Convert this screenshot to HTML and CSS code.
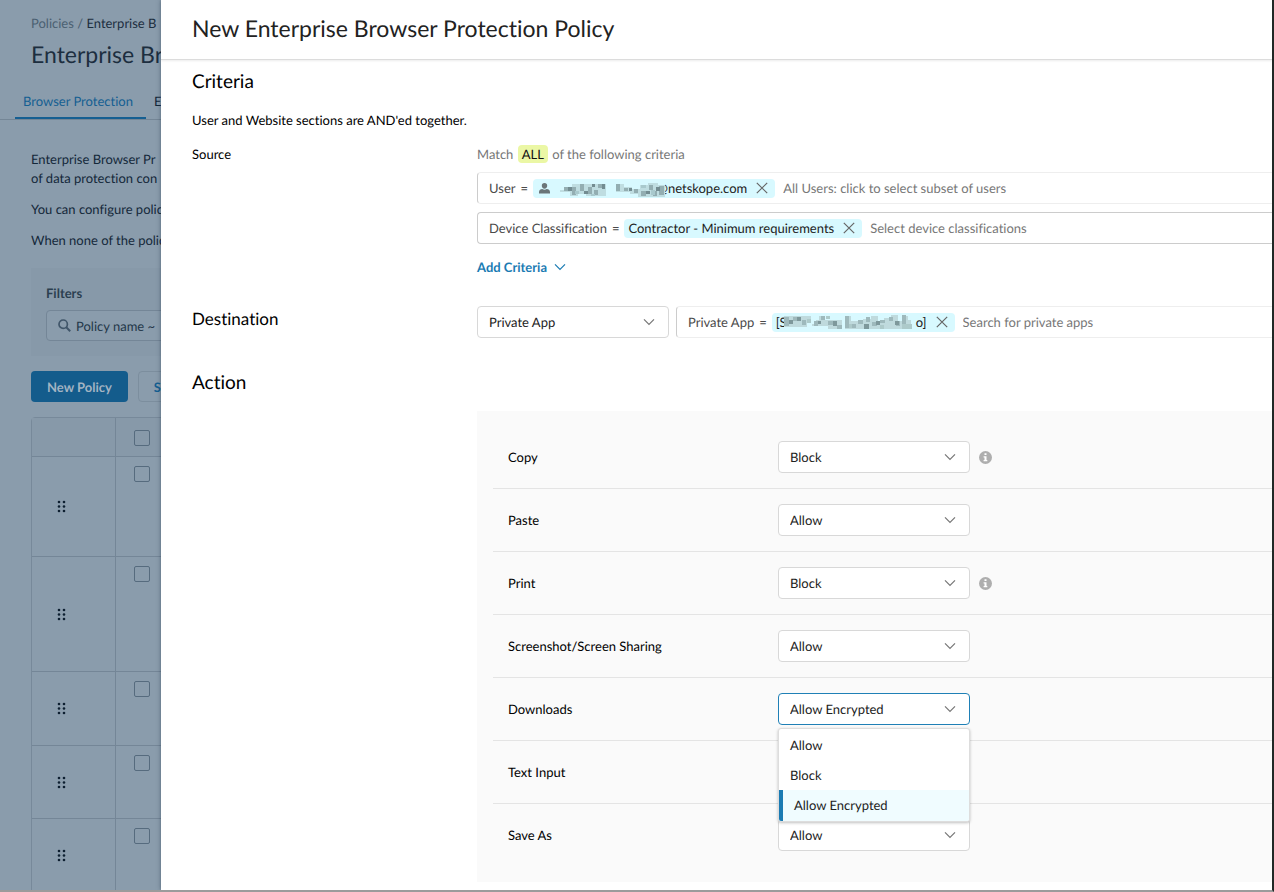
FILE: index.html
```html
<!DOCTYPE html>
<html lang="en">
<head>
<meta charset="utf-8">
<title>New Enterprise Browser Protection Policy</title>
<link rel="stylesheet" href="styles.css">
</head>
<body>
<svg class="sprite" aria-hidden="true">
  <symbol id="chevron" viewBox="0 0 12 8"><path d="M1 1.3 6 6.5 11 1.3" fill="none" stroke="currentColor" stroke-width="1.2"/></symbol>
  <symbol id="close" viewBox="0 0 12 12"><path d="M.8.8 11.2 11.2M11.2.8.8 11.2" fill="none" stroke="currentColor" stroke-width="1.2"/></symbol>
  <symbol id="grip" viewBox="0 0 9 13"><g fill="currentColor"><circle cx="2" cy="2" r="1.3"/><circle cx="7" cy="2" r="1.3"/><circle cx="2" cy="6.5" r="1.3"/><circle cx="7" cy="6.5" r="1.3"/><circle cx="2" cy="11" r="1.3"/><circle cx="7" cy="11" r="1.3"/></g></symbol>
  <symbol id="info" viewBox="0 0 13 13"><circle cx="6.500" cy="6.500" r="6.500" fill="#aeaeae"/><path d="M5.500 2.300h2v1.800h-2zM4.600 5.200h2.900v3.800h.8v1.300H4.600V9h.9V6.500h-.9z" fill="#fff"/></symbol>
</svg>
<div class="app">
  <main class="page">
    <nav class="crumbs"><a href="#">Policies</a> <span>/</span> <b>Enterprise B</b></nav>
    <h1 class="page-title">Enterprise Br</h1>
    <nav class="tabs"><a class="tab tab-active" href="#">Browser Protection</a><a class="tab" href="#">E</a></nav>
    <div class="content">
      <p>Enterprise Browser Pr<br>of data protection con</p>
      <p>You can configure polic</p>
      <p>When none of the polic</p>
      <section class="filters">
        <h2>Filters</h2>
        <button class="filter"><svg width="13" height="13" viewBox="0 0 13 13"><circle cx="5.200" cy="5.200" r="4.200" fill="none" stroke="#40566a" stroke-width="1.700"/><path d="m8.300 8.300 3.900 3.900" stroke="#40566a" stroke-width="2"/></svg>Policy name ~</button>
      </section>
      <div class="toolbar"><button class="primary">New Policy</button><button class="secondary">S</button></div>
      <table class="policies">
        <thead><tr><th></th><th><input type="checkbox" aria-label="Select all"></th></tr></thead>
        <tbody>
          <tr class="row-100"><td><svg class="grip"><use href="#grip"/></svg></td><td><input type="checkbox" aria-label="Select policy 1"></td></tr>
          <tr class="row-115"><td><svg class="grip"><use href="#grip"/></svg></td><td><input type="checkbox" aria-label="Select policy 2"></td></tr>
          <tr class="row-74"><td><svg class="grip"><use href="#grip"/></svg></td><td><input type="checkbox" aria-label="Select policy 3"></td></tr>
          <tr class="row-73"><td><svg class="grip"><use href="#grip"/></svg></td><td><input type="checkbox" aria-label="Select policy 4"></td></tr>
          <tr class="row-74"><td><svg class="grip"><use href="#grip"/></svg></td><td><input type="checkbox" aria-label="Select policy 5"></td></tr>
        </tbody>
      </table>
    </div>
  </main>

  <section class="drawer" role="dialog" aria-labelledby="drawer-title">
    <header class="drawer-head"><h2 id="drawer-title">New Enterprise Browser Protection Policy</h2></header>
    <div class="drawer-body">
      <h3>Criteria</h3>
      <p class="note">User and Website sections are AND'ed together.</p>
      <div class="form-row">
        <span class="label">Source</span>
        <div class="source">
          <p class="match">Match <mark>ALL</mark> of the following criteria</p>
          <label class="field field-light"><span>User</span><span class="eq">=</span>
            <span class="chip chip-user"><svg width="11" height="11" viewBox="0 0 11 11"><path d="M5.500 0a2.700 2.700 0 0 1 2.700 2.700c0 1.600-1.100 3-2.700 3S2.800 4.300 2.800 2.700A2.700 2.700 0 0 1 5.500 0zM0 10.500V9c0-2 1.600-2.800 3.300-3 .7.600 1.400.8 2.200.8S7 6.600 7.700 6c1.700.2 3.300 1 3.300 3v1.500z" fill="#6b7578"/></svg>
              <svg class="mosaic mosaic-user" width="107" height="14" viewBox="0 0 107 14"><path d="M97 0h8v14H97z" fill="#d8f9ff"/><path d="M0 7h4V4h8V1h34v12H26v-2h-8v2h-8V9H0zM56 1h8v3h8v2h8V2h8V0h10v2h7v12H78v-3h-8V9H56z" fill="#bfdde1"/><path d="M4 4h4v4H4zm8 0h4v8h-4zm8-3h4v7h-4zm8 3h4v7h-4zm10-3h4v4h-4zm-4 6h4v5h-4zM56 1h4v7h-4zm8 4h4v3h-4zm10 1h4v4h-4zm7 2h5v5h-5zm8-6h4v5h-4zm4 6h4v5h-4zm6-5h5v9h-5z" fill="#93aeb2"/><path d="M8 4h4v4H8zm16 4h4v3h-4zm18-7h3v5h-3zm-10 0h3v3h-3zm37 4h3v3h-3zm17 3h4v3h-4zm10-4h4v4h-4z" fill="#738c91"/><path d="M15 8h4v3h-4zm16 3h4v2h-4zm50-9h5v3h-5zm10 5h4v5h-4z" fill="#a9c9cd"/></svg><span>@netskope.com</span><svg class="close"><use href="#close"/></svg></span>
            <input type="text" placeholder="All Users: click to select subset of users"></label>
          <label class="field"><span>Device Classification</span><span class="eq">=</span>
            <span class="chip">Contractor - Minimum requirements<svg class="close"><use href="#close"/></svg></span>
            <input type="text" placeholder="Select device classifications"></label>
          <button class="add">Add Criteria<svg class="chev"><use href="#chevron"/></svg></button>
        </div>
      </div>
      <div class="form-row destination">
        <label class="label heading" for="dest">Destination</label>
        <div class="dest-fields">
          <span class="select"><select id="dest"><option>Private App</option></select><svg class="chev"><use href="#chevron"/></svg></span>
          <label class="field field-light"><span>Private App</span><span class="eq">=</span>
            <span class="chip">[S<svg class="mosaic mosaic-app" width="132" height="14" viewBox="0 0 132 14"><path d="M0 1h27v3h-4v8H0zM28 9h4V5h3V1h6v4h17v9H44v-3H28zM61 1h6v5h12V4h8V1h7v5h6V3h7V0h7v6h4V1h6v4h3v9H61z" fill="#bfdadd"/><path d="M0 2h5v9H0zm9 0h4v4H9zm9 3h4v5h-4zm12 1h4v5h-4zm7-5h4v4h-4zm7 5h5v4h-5zm9 4h5v4h-5zm8-9h4v12h-4zm7 8h4v4h-4zm6-4h5v4h-5zm8-3h4v5h-4zm6 5h5v4h-5zm8-2h5v3h-5zm9-3h4v4h-4zm7 4h4v5h-4zm6-6h4v12h-4z" fill="#9eb9bc"/><path d="M5 5h4v4H5zm8-3h4v4h-4zm21 4h3v3h-3zm15 0h4v5h-4zm31 3h5v5h-5zm12-3h4v4h-4zm19 0h4v4h-4z" fill="#7e989b"/><path d="M23 4h4v4h-4zm19-3h4v3h-4zm23 8h3v4h-3zm31 1h4v4h-4zm22-1h10v5h-10z" fill="#adcaca"/></svg>o]<svg class="close"><use href="#close"/></svg></span>
            <input type="text" placeholder="Search for private apps"></label>
        </div>
      </div>
      <h3 class="action-title">Action</h3>
      <div class="actions">
        <div class="action"><label for="a1">Copy</label><span class="select"><select id="a1"><option>Block</option></select><svg class="chev"><use href="#chevron"/></svg></span><svg class="info"><use href="#info"/></svg></div>
        <div class="action"><label for="a2">Paste</label><span class="select"><select id="a2"><option>Allow</option></select><svg class="chev"><use href="#chevron"/></svg></span></div>
        <div class="action"><label for="a3">Print</label><span class="select"><select id="a3"><option>Block</option></select><svg class="chev"><use href="#chevron"/></svg></span><svg class="info"><use href="#info"/></svg></div>
        <div class="action"><label for="a4">Screenshot/Screen Sharing</label><span class="select"><select id="a4"><option>Allow</option></select><svg class="chev"><use href="#chevron"/></svg></span></div>
        <div class="action"><label for="a5">Downloads</label><span class="select select-open"><select id="a5"><option>Allow Encrypted</option></select><svg class="chev"><use href="#chevron"/></svg>
          <ul class="menu" role="listbox" aria-label="Downloads"><li role="option">Allow</li><li role="option">Block</li><li role="option" class="chosen" aria-selected="true">Allow Encrypted</li></ul></span></div>
        <div class="action"><label for="a6">Text Input</label><span class="select"><select id="a6"><option>Allow</option></select><svg class="chev"><use href="#chevron"/></svg></span></div>
        <div class="action"><label for="a7">Save As</label><span class="select"><select id="a7"><option>Allow</option></select><svg class="chev"><use href="#chevron"/></svg></span></div>
      </div>
    </div>
  </section>
</div>
</body>
</html>
```
FILE: styles.css
```css
* { box-sizing: border-box; }
body { margin: 0; font: 13px/20px Lato, "Liberation Sans", sans-serif; font-variant-ligatures: none; text-rendering: geometricPrecision; color: #000; }
h1, h2, h3, p, ul { margin: 0; padding: 0; font-weight: 400; }
a { color: inherit; text-decoration: none; }
button, input, select { font: inherit; font-variant-ligatures: inherit; text-rendering: inherit; color: inherit; margin: 0; }
.sprite { display: none; }
.app { position: relative; height: 100vh; overflow: hidden; border-right: 2px solid #222826; border-bottom: 2px solid #9b9b9b; background: #8a9cac; }

/* dimmed page behind the drawer */
.page { width: 320px; color: #14283a; white-space: nowrap; }
.crumbs { padding: 13px 0 0 31px; color: #4b6072; }
.crumbs b { font-weight: 400; color: #1c2e3f; }
.page-title { padding: 5px 0 0 31px; font-size: 23px; line-height: 32px; color: #1c2e3f; }
.tabs { display: flex; margin-top: 15px; border-bottom: 1px solid #748696; }
.tab { padding: 6px 8px; }
.tab-active { margin-left: 15px; padding-right: 13px; color: #155f92; border-bottom: 2px solid #155f92; }
.content { padding: 30px 0 0 31px; }
.content p { line-height: 19px; margin-bottom: 12px; }
.filters { margin-top: 18px; height: 88px; padding: 15px; background: #8799a9; }
.filters h2 { font-size: 13px; line-height: 20px; font-weight: 700; color: #2b3f50; }
.filter { display: flex; align-items: center; gap: 5px; width: 200px; height: 31px; margin-top: 7px; padding: 0 11px; border: 1px solid #748697; border-radius: 4px; background: #8a9cac; color: #24384a; }
.toolbar { display: flex; gap: 10px; margin: 15px 0; }
.toolbar button { height: 31px; padding: 0 16px; border-radius: 4px; font-weight: 700; }
.primary { border: 0; background: #145c8c; color: #a3b4c3; }
.toolbar .secondary { width: 120px; padding: 0 15px; text-align: left; border: 1px solid #7c8e9e; background: transparent; color: #155f92; }
.policies { border-collapse: separate; border-spacing: 0; table-layout: fixed; width: 289px; border: 1px solid #77899a; border-radius: 4px; }
.policies th, .policies td { padding: 0; border-bottom: 1px solid #748697; vertical-align: top; text-align: left; }
.policies th { height: 39px; background: #8799a9; }
.policies th:first-child, .policies td:first-child { width: 84px; border-right: 1px solid #748697; vertical-align: middle; padding-left: 25px; }
.policies input { appearance: none; display: block; width: 16px; height: 16px; margin: 9px 0 0 18px; border: 1px solid #566b7e; border-radius: 2px; }
.policies th input { margin-top: 12px; }
.row-100 { height: 100px; }
.row-115 { height: 115px; }
.row-74 { height: 74px; }
.row-73 { height: 73px; }
.grip { display: block; width: 9px; height: 13px; color: #0d1f30; }

/* drawer */
.drawer { position: absolute; top: 0; right: 0; bottom: 0; left: 161px; overflow: hidden; background: #fff; box-shadow: 0 0 4px rgba(20, 40, 60, .5); }
.drawer-head { height: 60px; padding: 12px 31px; border-bottom: 1px solid #dcdcdc; box-shadow: 0 1px 2px rgba(0, 0, 0, .08); }
.drawer-head h2 { font-size: 23px; line-height: 32px; color: #222; }
.drawer-body { padding: 9px 0 0 31px; }
h3 { font-size: 19px; line-height: 26px; }
.note { margin-top: 15px; }
.form-row { display: grid; grid-template-columns: 285px 1fr; margin-top: 14px; }
.heading { font-size: 17px; line-height: 25px; }
.source { display: flex; flex-direction: column; gap: 8px; }
.match { color: #777; }
mark { margin: 0 1px; padding: 1px 4px; border-radius: 4px; background: #ebf7a5; color: #111; }
.field { display: flex; align-items: center; height: 32px; flex: 1; padding-left: 11px; border: 1px solid #ccc; border-right: 0; border-radius: 4px 0 0 4px; color: #4a4a4a; }
.field-light { border-color: #eee; border-left-color: #ccc; }
.source .field { flex: none; }
.eq { margin: 0 5px; }
.chip { display: flex; align-items: center; height: 19px; padding: 0 7px 0 4px; border-radius: 4px; background: #d8f9ff; color: #222; white-space: nowrap; }
.chip-user { padding-left: 6px; }
.mosaic { position: relative; }
.mosaic-user { margin: 4px -10px 0 10px; }
.mosaic-app { margin-left: -3px; }
.close { width: 12px; height: 12px; margin-left: 9px; color: #666; }
.field input { flex: 1; min-width: 0; border: 0; padding: 0; margin-left: 8px; background: transparent; outline: 0; }
.field input::placeholder { color: #777; opacity: 1; }
.add { display: flex; align-items: center; gap: 7px; align-self: flex-start; height: 20px; margin-top: 5px; padding: 0; border: 0; background: none; font-weight: 700; color: #1b7bb3; }
.chev { width: 12px; height: 8px; }
.destination { margin-top: 29px; }
.dest-fields { display: flex; gap: 7px; }
.select { position: relative; display: block; width: 192px; height: 32px; color: #222; }
.select select { appearance: none; width: 100%; height: 100%; padding: 0 11px; border: 1px solid #d8d8d8; border-radius: 4px; background: #fff; }
.select > .chev { position: absolute; right: 14px; top: 12px; color: #777; pointer-events: none; }
.select-open select { border-color: #1f80b6; }
.action-title { margin-top: 32px; }
.actions { margin: 15px 0 0 285px; padding: 15px 0 15px 16px; background: #fafafa; }
.action { display: grid; grid-template-columns: 270px 192px 22px; align-items: center; height: 63px; padding-left: 15px; border-bottom: 1px solid #e4e4e4; }
.action:last-child { border-bottom-color: transparent; }
.info { width: 13px; height: 13px; margin-left: 9px; }
.menu { position: absolute; z-index: 2; top: 35px; left: 0; right: 0; padding-top: 1px; list-style: none; border: 1px solid #ddd; border-radius: 3px; background: #fff; box-shadow: 0 1px 3px rgba(0, 0, 0, .25); overflow: hidden; }
.menu li { height: 30px; line-height: 30px; padding-left: 11px; }
.menu .chosen { height: 31px; border-left: 4px solid #1b7bb3; background: #f0fcff; }
```
